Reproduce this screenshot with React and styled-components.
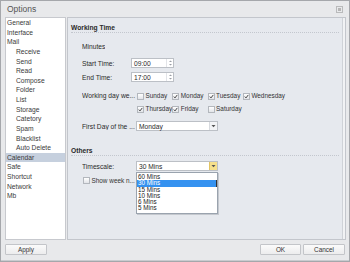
import styled, { createGlobalStyle } from "styled-components";

const GlobalStyle = createGlobalStyle`
  body {
    margin: 0;
    font-family: "Liberation Sans", Arial, sans-serif;
  }
`;

const navItems = [
  { label: "General" },
  { label: "Interface" },
  { label: "Mail" },
  { label: "Receive", sub: true },
  { label: "Send", sub: true },
  { label: "Read", sub: true },
  { label: "Compose", sub: true },
  { label: "Folder", sub: true },
  { label: "List", sub: true },
  { label: "Storage", sub: true },
  { label: "Catetory", sub: true },
  { label: "Spam", sub: true },
  { label: "Blacklist", sub: true },
  { label: "Auto Delete", sub: true },
  { label: "Calendar", active: true },
  { label: "Safe" },
  { label: "Shortcut" },
  { label: "Network" },
  { label: "Mb" },
];

const days = [
  { label: "Sunday", checked: false },
  { label: "Monday", checked: true },
  { label: "Tuesday", checked: true },
  { label: "Wednesday", checked: true },
  { label: "Thursday", checked: true },
  { label: "Friday", checked: true },
  { label: "Saturday", checked: false },
];

const scales = ["60 Mins", "30 Mins", "15 Mins", "10 Mins", "6 Mins", "5 Mins"];

const Spinner = () => (
  <SpinBox>
    <svg width="5" height="8" viewBox="0 0 5 8">
      <path d="M1 3 L2.5 1.5 L4 3 Z" fill="#9a9ea6" />
      <path d="M1 5 L2.5 6.5 L4 5 Z" fill="#9a9ea6" />
    </svg>
  </SpinBox>
);

const Arrow = () => (
  <svg width="5" height="4" viewBox="0 0 5 4">
    <path d="M0.5 1 L4.5 1 L2.5 3.2 Z" fill="#555" />
  </svg>
);

const Check = ({ checked }) => (
  <Box>
    {checked && (
      <svg width="5" height="5" viewBox="0 0 5 5">
        <path d="M0.8 2.6 L2 3.9 L4.3 0.9" stroke="#333" strokeWidth="0.9" fill="none" />
      </svg>
    )}
  </Box>
);

const App = () => {
  return (
    <>
      <GlobalStyle />
      <Window>
        <TitleBar>
          <span>Options</span>
          <svg width="7" height="7" viewBox="0 0 7 7">
            <rect x="0.5" y="0.5" width="6" height="6" fill="none" stroke="#8a8a8a" strokeDasharray="1 1" />
            <rect x="2" y="2" width="3" height="3" fill="#b5b5b5" />
          </svg>
        </TitleBar>
        <Body>
          <Sidebar>
            {navItems.map((item) => (
              <NavItem key={item.label} $sub={item.sub} $active={item.active}>
                {item.label}
              </NavItem>
            ))}
          </Sidebar>
          <Content>
            <SectionTitle>Working Time</SectionTitle>
            <Row $mt={8}>
              <Label>Minutes</Label>
            </Row>
            <Row $mt={7}>
              <Label $w={49}>Start Time:</Label>
              <TimeInput>
                <span>09:00</span>
                <Spinner />
              </TimeInput>
            </Row>
            <Row $mt={4}>
              <Label $w={49}>End Time:</Label>
              <TimeInput>
                <span>17:00</span>
                <Spinner />
              </TimeInput>
            </Row>
            <DaysRow>
              <Label $w={55}>Working day we...</Label>
              <DaysGrid>
                {days.map((d) => (
                  <CheckLabel key={d.label}>
                    <Check checked={d.checked} />
                    {d.label}
                  </CheckLabel>
                ))}
              </DaysGrid>
            </DaysRow>
            <Row $mt={7}>
              <Label $w={54}>First Day of the ...</Label>
              <Select>
                <span>Monday</span>
                <SelectButton>
                  <Arrow />
                </SelectButton>
              </Select>
            </Row>
            <SectionTitle $mt={15}>Others</SectionTitle>
            <Row $mt={5}>
              <Label $w={54}>Timescale:</Label>
              <Select>
                <span>30 Mins</span>
                <SelectButton $hover>
                  <Arrow />
                </SelectButton>
                <DropList>
                  {scales.map((s) => (
                    <DropItem key={s} $selected={s === "30 Mins"}>
                      {s}
                    </DropItem>
                  ))}
                </DropList>
              </Select>
            </Row>
            <Row $mt={4} $pl={12}>
              <CheckLabel>
                <Check checked={false} />
                Show week n...
              </CheckLabel>
            </Row>
          </Content>
        </Body>
        <Footer>
          <Button $w={42}>Apply</Button>
          <Spacer />
          <Button $w={41}>OK</Button>
          <Button $w={42}>Cancel</Button>
        </Footer>
      </Window>
    </>
  );
};

export default App;

const Window = styled.div`
  width: 350px;
  height: 262px;
  box-sizing: border-box;
  border: 1px solid #a5a7ab;
  background: #e8e9eb;
  display: flex;
  flex-direction: column;
  overflow: hidden;
`;

const TitleBar = styled.div`
  height: 16px;
  display: flex;
  align-items: center;
  justify-content: space-between;
  padding: 0 6px 0 6px;
  font-size: 8.5px;
  color: #555;
`;

const Body = styled.div`
  flex: 1;
  display: flex;
  gap: 1px;
  padding: 0 3px 0 4px;
  min-height: 0;
`;

const Sidebar = styled.div`
  width: 61px;
  box-sizing: border-box;
  background: #fff;
  border: 1px solid #c7c9ce;
  padding-top: 0;
`;

const NavItem = styled.div`
  height: 9.63px;
  line-height: 9.63px;
  font-size: 6.7px;
  color: #3a3a3a;
  padding-left: ${(p) => (p.$sub ? "10px" : "1px")};
  background: ${(p) => (p.$active ? "#c6d0de" : "transparent")};
  white-space: nowrap;
`;

const Content = styled.div`
  flex: 1;
  box-sizing: border-box;
  border: 1px solid #c3c6cc;
  box-shadow: inset -2px 0 0 #f1f2f4, inset -3px 0 0 #cfd2d7;
  background: #e6e9ee;
  padding: 0 6px 0 3px;
  color: #2a2a2a;
`;

const SectionTitle = styled.div`
  margin-top: ${(p) => p.$mt ?? 5}px;
  height: 9px;
  line-height: 9px;
  font-size: 6.7px;
  font-weight: bold;
  padding-left: 0;
  border-bottom: 1px dotted #c3c7ce;
`;

const Row = styled.div`
  margin-top: ${(p) => p.$mt}px;
  height: 10px;
  display: flex;
  align-items: center;
  padding-left: ${(p) => p.$pl ?? 11}px;
  font-size: 6.7px;
`;

const Label = styled.div`
  width: ${(p) => (p.$w ? `${p.$w}px` : "auto")};
  flex-shrink: 0;
  white-space: nowrap;
  overflow: hidden;
`;

const TimeInput = styled.div`
  width: 43px;
  height: 10px;
  box-sizing: border-box;
  border: 1px solid #bcc0c6;
  background: #fff;
  display: flex;
  align-items: center;
  justify-content: space-between;
  padding-left: 2px;
  font-size: 6.7px;
`;

const SpinBox = styled.div`
  width: 6px;
  height: 8px;
  display: flex;
  align-items: center;
  justify-content: center;
  border-left: 1px solid #e2e4e8;
`;

const DaysRow = styled.div`
  margin-top: 9px;
  display: flex;
  padding-left: 11px;
  font-size: 6.7px;
  line-height: 10px;
`;

const DaysGrid = styled.div`
  display: grid;
  grid-template-columns: repeat(4, 35.3px);
  row-gap: 3px;
  & > :nth-child(5) {
    grid-column: 1;
  }
`;

const CheckLabel = styled.label`
  display: flex;
  align-items: center;
  gap: 1.5px;
  height: 10px;
  white-space: nowrap;
  font-size: 6.4px;
  color: #333;
`;

const Box = styled.span`
  width: 7px;
  height: 7px;
  box-sizing: border-box;
  border: 1px solid #b3b7bd;
  background: linear-gradient(#ffffff, #e2e4e8);
  display: flex;
  align-items: center;
  justify-content: center;
  flex-shrink: 0;
`;

const Select = styled.div`
  position: relative;
  width: 82px;
  height: 10px;
  box-sizing: border-box;
  border: 1px solid #bcc0c6;
  background: #fff;
  display: flex;
  align-items: center;
  justify-content: space-between;
  padding-left: 2px;
  font-size: 6.7px;
`;

const SelectButton = styled.div`
  width: 7px;
  height: 8px;
  display: flex;
  align-items: center;
  justify-content: center;
  background: ${(p) => (p.$hover ? "#f6e08c" : "#f3f4f6")};
  border-left: 1px solid ${(p) => (p.$hover ? "#e2c462" : "#d7dadf")};
`;

const DropList = styled.div`
  position: absolute;
  top: 10px;
  left: -1px;
  width: 82px;
  box-sizing: border-box;
  border: 1px solid #9aa3ae;
  box-shadow: 1px 1px 0 #c4c8ce;
  background: #fff;
  padding: 1px 0 1px;
  z-index: 2;
`;

const DropItem = styled.div`
  height: 6.3px;
  line-height: 6.3px;
  font-size: 6.3px;
  padding-left: 1px;
  color: ${(p) => (p.$selected ? "#fff" : "#222")};
  background: ${(p) => (p.$selected ? "#3592f0" : "transparent")};
  box-shadow: ${(p) => (p.$selected ? "inset -1px 0 0 #333" : "none")};
`;

const Footer = styled.div`
  height: 21px;
  display: flex;
  align-items: flex-start;
  gap: 2px;
  padding: 4px 4px 0 4px;
  box-sizing: border-box;
  border-bottom: 1px solid #c9cbcf;
`;

const Spacer = styled.div`
  flex: 1;
`;

const Button = styled.div`
  width: ${(p) => p.$w}px;
  height: 11px;
  box-sizing: border-box;
  border: 1px solid #c3c5c9;
  border-radius: 1px;
  background: linear-gradient(#fbfbfb, #ececed);
  display: flex;
  align-items: center;
  justify-content: center;
  font-size: 6.4px;
  color: #333;
`;
